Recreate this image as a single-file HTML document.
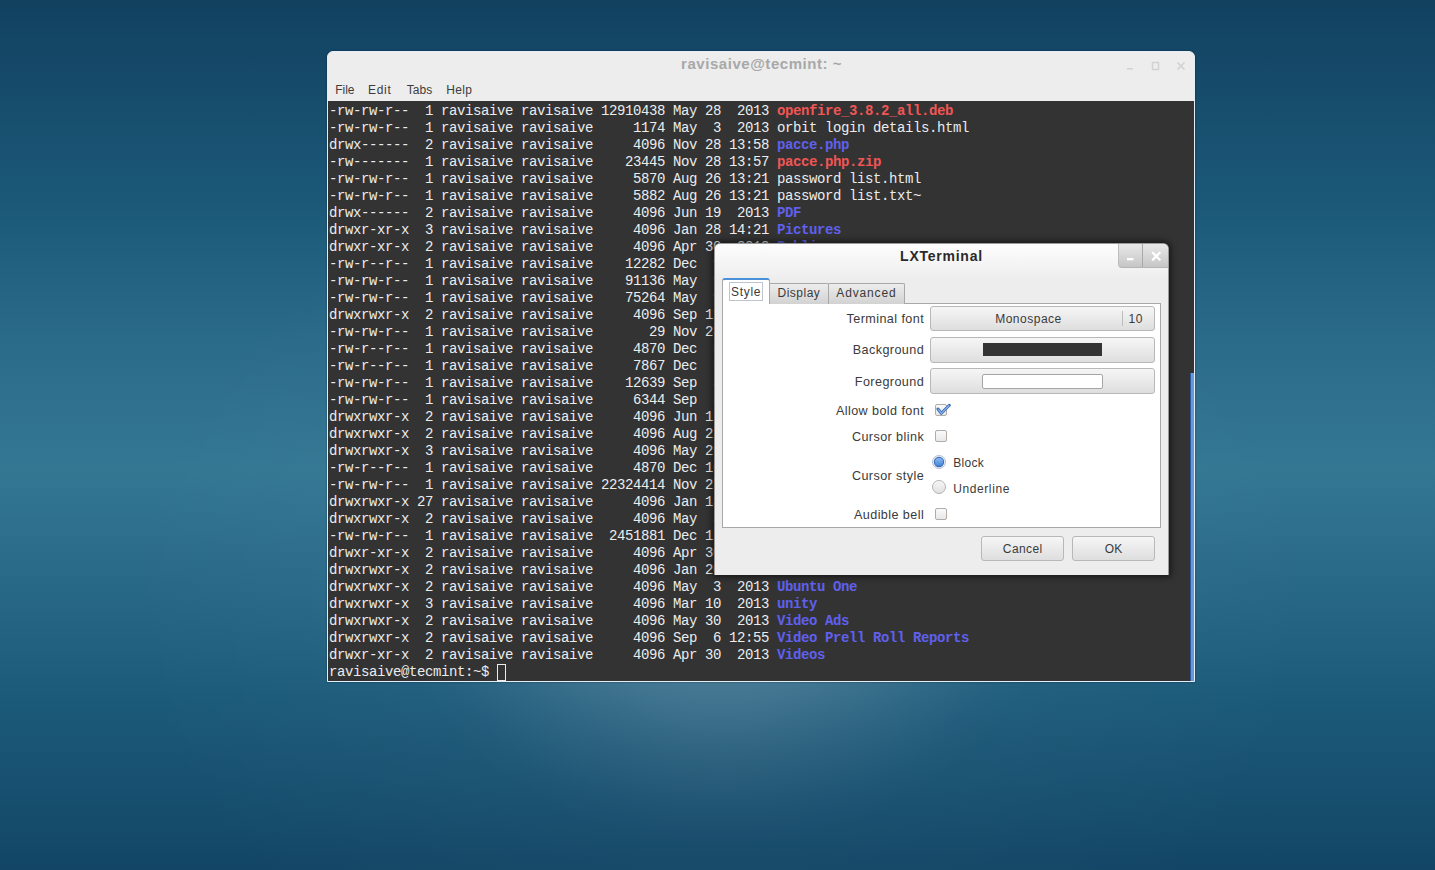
<!DOCTYPE html>
<html><head><meta charset="utf-8">
<style>
*{margin:0;padding:0;box-sizing:border-box}
html,body{width:1435px;height:870px;overflow:hidden}
body{position:relative;font-family:"Liberation Sans",sans-serif;
background:radial-gradient(ellipse 600px 450px at 720px 600px,rgba(255,255,255,.05),rgba(255,255,255,0) 100%),radial-gradient(ellipse 360px 330px at 722px 520px,rgba(255,255,255,.28) 0%,rgba(255,255,255,.125) 55%,rgba(255,255,255,.05) 75%,rgba(255,255,255,.012) 90%,rgba(255,255,255,0) 100%),linear-gradient(to bottom,#124160 0px,#1b5878 200px,#2b6b8a 340px,#337793 470px,#286887 590px,#1c5a7a 700px,#134767 860px,#134666 870px);}
.a{position:absolute}
.t{position:absolute;white-space:nowrap;line-height:normal;font-family:"Liberation Sans",sans-serif}
#win{left:327px;top:51px;width:868px;height:631px;background:#ededed;border-radius:6px 6px 0 0;border:1px solid #e4eef4;box-shadow:0 0 2px rgba(0,20,40,.6)}
#term{left:328px;top:101px;width:866px;height:580px;background:#333;}
#tt{left:329px;top:103px;font-family:"Liberation Mono",monospace;font-size:14px;letter-spacing:-0.4px;line-height:17px;color:#ececec;white-space:pre;}
#tt .r{color:#f05656;font-weight:bold}
#tt .b{color:#6060ec;font-weight:bold}
#tt .cur{display:inline-block;width:9px;height:17px;border:1px solid #ececec;vertical-align:top}
#sb{left:1190px;top:373px;width:4px;height:308px;background:#6698da;border-left:1px solid #2c5a9a}
#dlg{left:714px;top:243px;width:455px;height:332px;background:#ededed;border-radius:6px 6px 0 0;box-shadow:0 0 6px 2px rgba(0,0,0,.55);overflow:hidden;border:1px solid #9a9a9a;border-bottom:none}
#dhead{left:715px;top:244px;width:453px;height:36px;background:linear-gradient(#fdfdfd,#ededed);border-radius:5px 5px 0 0}
#dbtns{left:1118px;top:244px;width:50px;height:24px;border-radius:0 5px 0 4px;background:linear-gradient(#e8e8e8,#c6c6c6);border-left:1px solid #bdbdbd;border-bottom:1px solid #b5b5b5}
#dsep{left:1142px;top:244px;width:1px;height:23px;background:#a9a9a9}
#page{left:722px;top:303px;width:439px;height:225px;background:#fff;border:1px solid #a8a8a8}
.tab{position:absolute;border:1px solid #a8a8a8;border-bottom:none;border-radius:2px 2px 0 0;background:linear-gradient(#ededed,#d2d2d2)}
.btn{position:absolute;border:1px solid #b8b8b8;border-radius:3px;background:linear-gradient(#f6f6f6,#dedede)}
.cb{position:absolute;left:935px;width:12px;height:12px;border:1px solid #b2aca6;border-radius:2px;background:linear-gradient(#fafafa,#e8e8e8)}
.rd{position:absolute;left:932px;width:13px;height:13px;border:1px solid #a8a8a8;border-radius:50%;background:linear-gradient(#f4f4f4,#e2e2e2)}
</style></head><body>
<div id="win" class="a"></div>
<div id="term" class="a"></div>
<div id="tt" class="a">-rw-rw-r--  1 ravisaive ravisaive 12910438 May 28  2013 <span class="r">openfire_3.8.2_all.deb</span>
-rw-rw-r--  1 ravisaive ravisaive     1174 May  3  2013 <span>orbit login details.html</span>
drwx------  2 ravisaive ravisaive     4096 Nov 28 13:58 <span class="b">pacce.php</span>
-rw-------  1 ravisaive ravisaive    23445 Nov 28 13:57 <span class="r">pacce.php.zip</span>
-rw-rw-r--  1 ravisaive ravisaive     5870 Aug 26 13:21 <span>password list.html</span>
-rw-rw-r--  1 ravisaive ravisaive     5882 Aug 26 13:21 <span>password list.txt~</span>
drwx------  2 ravisaive ravisaive     4096 Jun 19  2013 <span class="b">PDF</span>
drwxr-xr-x  3 ravisaive ravisaive     4096 Jan 28 14:21 <span class="b">Pictures</span>
drwxr-xr-x  2 ravisaive ravisaive     4096 Apr 30  2013 <span class="b">Public</span>
-rw-r--r--  1 ravisaive ravisaive    12282 Dec  9  2013 <span>receipt.pdf</span>
-rw-rw-r--  1 ravisaive ravisaive    91136 May  9  2013 <span>report.doc</span>
-rw-rw-r--  1 ravisaive ravisaive    75264 May  9  2013 <span>report2.doc</span>
drwxrwxr-x  2 ravisaive ravisaive     4096 Sep 11  2013 <span class="b">scripts</span>
-rw-rw-r--  1 ravisaive ravisaive       29 Nov 28 13:30 <span>sample.txt</span>
-rw-r--r--  1 ravisaive ravisaive     4870 Dec  5  2013 <span>sources.list</span>
-rw-r--r--  1 ravisaive ravisaive     7867 Dec  5  2013 <span>sources.txt</span>
-rw-rw-r--  1 ravisaive ravisaive    12639 Sep  3  2013 <span>test.html</span>
-rw-rw-r--  1 ravisaive ravisaive     6344 Sep  3  2013 <span>test2.html</span>
drwxrwxr-x  2 ravisaive ravisaive     4096 Jun 12  2013 <span class="b">Templates</span>
drwxrwxr-x  2 ravisaive ravisaive     4096 Aug 22  2013 <span class="b">tecmint</span>
drwxrwxr-x  3 ravisaive ravisaive     4096 May 29  2013 <span class="b">themes</span>
-rw-r--r--  1 ravisaive ravisaive     4870 Dec 16  2013 <span>tmp.list</span>
-rw-rw-r--  1 ravisaive ravisaive 22324414 Nov 27 12:10 <span class="r">tor.tar.gz</span>
drwxrwxr-x 27 ravisaive ravisaive     4096 Jan 13 11:02 <span class="b">tor-browser</span>
drwxrwxr-x  2 ravisaive ravisaive     4096 May  3  2013 <span class="b">tools</span>
-rw-rw-r--  1 ravisaive ravisaive  2451881 Dec 12  2013 <span class="r">tuts.zip</span>
drwxr-xr-x  2 ravisaive ravisaive     4096 Apr 30  2013 <span class="b">Ubuntu</span>
drwxrwxr-x  2 ravisaive ravisaive     4096 Jan 20 11:22 <span class="b">Ubuntu Mobile</span>
drwxrwxr-x  2 ravisaive ravisaive     4096 May  3  2013 <span class="b">Ubuntu One</span>
drwxrwxr-x  3 ravisaive ravisaive     4096 Mar 10  2013 <span class="b">unity</span>
drwxrwxr-x  2 ravisaive ravisaive     4096 May 30  2013 <span class="b">Video Ads</span>
drwxrwxr-x  2 ravisaive ravisaive     4096 Sep  6 12:55 <span class="b">Video Prell Roll Reports</span>
drwxr-xr-x  2 ravisaive ravisaive     4096 Apr 30  2013 <span class="b">Videos</span>
ravisaive@tecmint:~$ <span class="cur"></span></div>
<div id="sb" class="a"></div>
<svg class="a" style="left:1118px;top:56px" width="72" height="20" viewBox="0 0 72 20">
  <rect x="9" y="12" width="6" height="1.5" fill="#d2d2d2"/>
  <rect x="34.5" y="6.5" width="6" height="7" fill="none" stroke="#d2d2d2" stroke-width="1.5"/>
  <path d="M59.5 6.5 L66.5 13.5 M66.5 6.5 L59.5 13.5" stroke="#d2d2d2" stroke-width="1.7"/>
</svg>

<div id="dlg" class="a"></div>
<div id="dhead" class="a"></div>
<div id="dbtns" class="a"></div>
<div id="dsep" class="a"></div>
<svg class="a" style="left:1118px;top:244px" width="50" height="24" viewBox="0 0 50 24">
  <rect x="9" y="14" width="6.5" height="2.3" fill="#fff"/>
  <path d="M35 9 L41.5 15.5 M41.5 9 L35 15.5" stroke="#fff" stroke-width="2.3" stroke-linecap="square"/>
</svg>
<div id="page" class="a"></div>
<div class="tab" style="left:769px;top:283px;width:60px;height:21px"></div>
<div class="tab" style="left:828px;top:283px;width:77px;height:21px"></div>
<div class="a" style="left:722px;top:278px;width:48px;height:26px;background:#fff;border:1px solid #a8a8a8;border-bottom:none;border-top:2px solid #4a90d9;border-radius:3px 3px 0 0"></div>
<div class="a" style="left:729px;top:282px;width:34px;height:19px;border:1px solid #c0c4cc"></div>

<div class="btn" style="left:930px;top:306px;width:225px;height:25px"></div>
<div class="a" style="left:1122px;top:311px;width:1px;height:15px;background:#bcbcbc"></div>
<div class="btn" style="left:930px;top:337px;width:225px;height:26px"></div>
<div class="a" style="left:983px;top:343px;width:119px;height:13px;background:#333;"></div>
<div class="btn" style="left:930px;top:368px;width:225px;height:26px"></div>
<div class="a" style="left:982px;top:374px;width:121px;height:15px;background:#fff;border:1px solid #a5a5a5;border-radius:2px"></div>

<div class="cb" style="top:404px"></div>
<svg class="a" style="left:935px;top:401px" width="16" height="16" viewBox="0 0 16 16"><path d="M3 8 L6.3 12.3 L14.3 4.3" fill="none" stroke="#3d6fb8" stroke-width="3" stroke-linejoin="round" stroke-linecap="round"/><path d="M3.2 8.2 L6.3 12.3 L14.1 4.5" fill="none" stroke="#8cb6ea" stroke-width="1.1" stroke-linejoin="round"/></svg>
<div class="cb" style="top:430px"></div>
<svg class="a" style="left:931px;top:454px" width="16" height="16" viewBox="0 0 16 16">
  <defs><linearGradient id="rb" x1="0" y1="0" x2="0" y2="1"><stop offset="0" stop-color="#8fbdf2"/><stop offset="1" stop-color="#3f82d8"/></linearGradient>
  <linearGradient id="rg" x1="0" y1="0" x2="0" y2="1"><stop offset="0" stop-color="#fbfbfb"/><stop offset="1" stop-color="#dedede"/></linearGradient></defs>
  <circle cx="8" cy="8" r="6.6" fill="#e4eaf2" stroke="#b9c6d8" stroke-width="1"/>
  <circle cx="8" cy="8" r="4.6" fill="url(#rb)" stroke="#3b6fb6" stroke-width="1.1"/>
</svg>
<svg class="a" style="left:931px;top:479px" width="16" height="16" viewBox="0 0 16 16">
  <circle cx="8" cy="8" r="6.5" fill="url(#rg)" stroke="#b4b4b4" stroke-width="1"/>
  <circle cx="8" cy="8.5" r="4.2" fill="none" stroke="#e6e6e6" stroke-width="0.8"/>
</svg>
<div class="cb" style="top:508px"></div>

<div class="btn" style="left:981px;top:536px;width:83px;height:25px"></div>
<div class="btn" style="left:1072px;top:536px;width:83px;height:25px"></div>
<div class="t" style="left:461.30px;width:600px;text-align:center;top:54.80px;font-size:15px;letter-spacing:0.55px;text-indent:0.55px;font-weight:bold;color:#a8a8a8;">ravisaive@tecmint: ~</div>
<div class="t" style="left:335.2px;top:83.00px;font-size:12px;color:#3c3c3c;">File</div>
<div class="t" style="left:368.0px;top:83.00px;font-size:12px;letter-spacing:0.7px;color:#3c3c3c;">Edit</div>
<div class="t" style="left:406.8px;top:83.00px;font-size:12px;color:#3c3c3c;">Tabs</div>
<div class="t" style="left:446.3px;top:83.00px;font-size:12px;letter-spacing:0.3px;color:#3c3c3c;">Help</div>
<div class="t" style="left:641.10px;width:600px;text-align:center;top:248.00px;font-size:14px;letter-spacing:0.75px;text-indent:0.75px;font-weight:bold;color:#2a2a2a;">LXTerminal</div>
<div class="t" style="right:510.88px;top:312.30px;font-size:12.6px;letter-spacing:0.42px;color:#3a3a3a;">Terminal font</div>
<div class="t" style="right:510.88px;top:343.20px;font-size:12.6px;letter-spacing:0.42px;color:#3a3a3a;">Background</div>
<div class="t" style="right:510.88px;top:374.90px;font-size:12.6px;letter-spacing:0.42px;color:#3a3a3a;">Foreground</div>
<div class="t" style="right:510.88px;top:404.00px;font-size:12.6px;letter-spacing:0.42px;color:#3a3a3a;">Allow bold font</div>
<div class="t" style="right:510.88px;top:429.90px;font-size:12.6px;letter-spacing:0.42px;color:#3a3a3a;">Cursor blink</div>
<div class="t" style="right:510.88px;top:468.80px;font-size:12.6px;letter-spacing:0.42px;color:#3a3a3a;">Cursor style</div>
<div class="t" style="right:510.88px;top:507.90px;font-size:12.6px;letter-spacing:0.42px;color:#3a3a3a;">Audible bell</div>
<div class="t" style="left:731px;top:284.70px;font-size:12px;letter-spacing:0.7px;color:#3a3a3a;">Style</div>
<div class="t" style="left:777.5px;top:285.60px;font-size:12px;letter-spacing:0.5px;color:#3a3a3a;">Display</div>
<div class="t" style="left:836.3px;top:285.60px;font-size:12px;letter-spacing:0.85px;color:#3a3a3a;">Advanced</div>
<div class="t" style="left:995.2px;top:311.80px;font-size:12px;letter-spacing:0.5px;color:#3a3a3a;">Monospace</div>
<div class="t" style="left:1128.4px;top:311.80px;font-size:12px;letter-spacing:0.6px;color:#3a3a3a;">10</div>
<div class="t" style="left:953.2px;top:455.70px;font-size:12px;letter-spacing:0.3px;color:#3a3a3a;">Block</div>
<div class="t" style="left:953.2px;top:481.90px;font-size:12px;letter-spacing:0.6px;color:#3a3a3a;">Underline</div>
<div class="t" style="left:722.50px;width:600px;text-align:center;top:541.70px;font-size:12px;letter-spacing:0.4px;text-indent:0.4px;color:#3a3a3a;">Cancel</div>
<div class="t" style="left:813.50px;width:600px;text-align:center;top:541.70px;font-size:12px;color:#3a3a3a;">OK</div>
</body></html>
